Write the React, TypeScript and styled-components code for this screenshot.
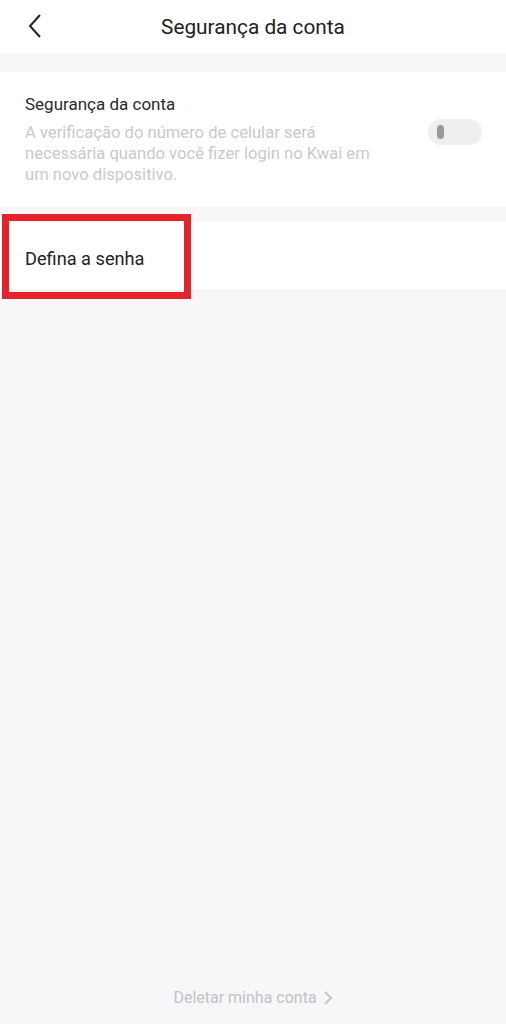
import React from "react"
import styled, { createGlobalStyle } from "styled-components"

const GlobalStyle = createGlobalStyle`
  html, body {
    margin: 0;
    padding: 0;
    background: #f7f7f9;
  }
  body {
    font-family: Roboto, "Liberation Sans", Arial, sans-serif;
  }
`

const Page = styled.div`
  display: flex;
  flex-direction: column;
  width: 506px;
  height: 1024px;
  background: #f7f7f9;
  overflow: hidden;
`

const Header = styled.header`
  position: relative;
  display: flex;
  align-items: center;
  justify-content: center;
  height: 53px;
  background: #ffffff;
`

const BackButton = styled.button`
  position: absolute;
  left: 22px;
  top: 12px;
  display: flex;
  padding: 0;
  border: none;
  background: none;
`

const Title = styled.h1`
  margin: 0;
  font-size: 20.8px;
  font-weight: 400;
  color: #222222;
`

const Card = styled.section`
  display: flex;
  align-items: center;
  margin-top: 19px;
  padding: 21px 24px 22px 25px;
  background: #ffffff;
`

const CardText = styled.div`
  display: flex;
  flex-direction: column;
  width: 368px;
`

const CardTitle = styled.div`
  font-size: 17px;
  color: #2a2a2a;
  line-height: 22px;
`

const CardDesc = styled.div`
  margin-top: 7px;
  font-size: 16.6px;
  line-height: 21px;
  color: #c9c9cd;
`

const Toggle = styled.div`
  display: flex;
  align-items: center;
  margin-left: auto;
  margin-top: -14px;
  width: 54px;
  height: 26px;
  padding-left: 9px;
  box-sizing: border-box;
  border-radius: 13px;
  background: #efeff1;
`

const Knob = styled.div`
  width: 7px;
  height: 14px;
  border-radius: 4px;
  background: #9a9a9c;
`

const RowWrap = styled.div`
  position: relative;
  margin-top: 15px;
`

const Row = styled.div`
  display: flex;
  align-items: center;
  height: 67px;
  padding: 5px 25px 0;
  box-sizing: border-box;
  background: #ffffff;
  font-size: 18.2px;
  color: #222222;
`

const Highlight = styled.div`
  position: absolute;
  left: 2px;
  top: -8px;
  width: 189px;
  height: 85px;
  box-sizing: border-box;
  border: 7px solid #e4232b;
`

const Spacer = styled.div`
  flex: 1;
`

const Footer = styled.div`
  display: flex;
  justify-content: center;
  align-items: center;
  gap: 6px;
  padding-bottom: 17px;
  font-size: 16px;
  color: #c2c2c6;
`

export default function App() {
  return (
    <>
      <GlobalStyle />
      <Page>
        <Header>
          <BackButton aria-label="Voltar">
            <svg width="28" height="28" viewBox="0 0 28 28">
              <path
                d="M18 3 L8 14 L18 25"
                fill="none"
                stroke="#222"
                strokeWidth="2"
                strokeLinejoin="miter"
              />
            </svg>
          </BackButton>
          <Title>Segurança da conta</Title>
        </Header>
        <Card>
          <CardText>
            <CardTitle>Segurança da conta</CardTitle>
            <CardDesc>
              A verificação do número de celular será necessária quando você
              fizer login no Kwai em um novo dispositivo.
            </CardDesc>
          </CardText>
          <Toggle>
            <Knob />
          </Toggle>
        </Card>
        <RowWrap>
          <Row>Defina a senha</Row>
          <Highlight />
        </RowWrap>
        <Spacer />
        <Footer>
          Deletar minha conta
          <svg width="10" height="16" viewBox="0 0 10 16">
            <path d="M2 2 L8 8 L2 14" fill="none" stroke="#c6c6ca" strokeWidth="2.2" />
          </svg>
        </Footer>
      </Page>
    </>
  )
}
